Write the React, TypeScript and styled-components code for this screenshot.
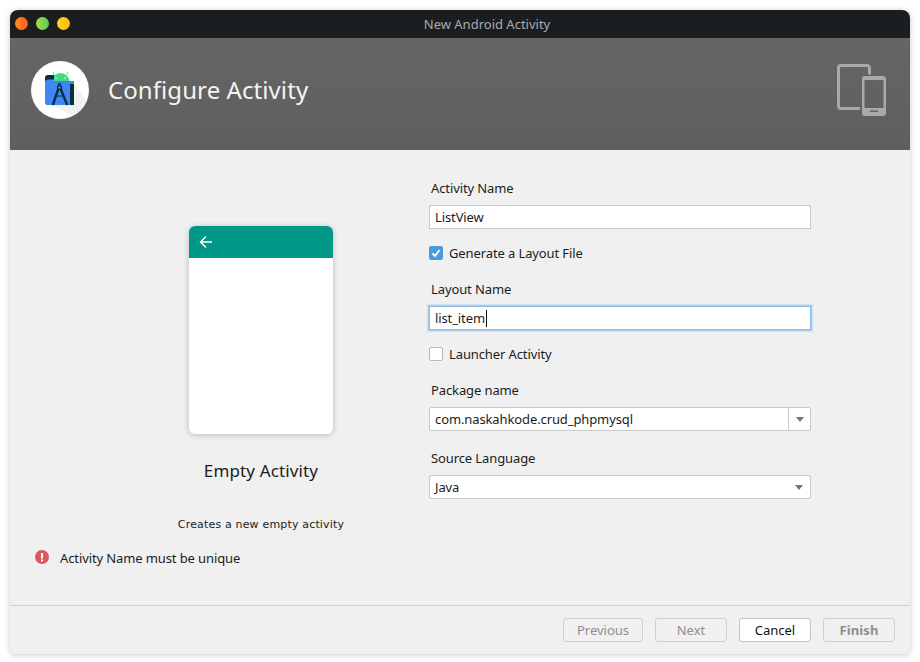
import React from 'react';
import styled, { createGlobalStyle } from 'styled-components';

const GlobalStyle = createGlobalStyle`
  html, body {
    margin: 0;
    padding: 0;
    background: #ffffff;
  }
  * {
    box-sizing: border-box;
  }
`;

const Page = styled.div`
  width: 920px;
  height: 662px;
  padding: 10px 10px 8px;
  font-family: 'Noto Sans', sans-serif;
  font-size: 13px;
  letter-spacing: -0.11px;
  color: #1c1c1c;
`;

const Window = styled.div`
  width: 900px;
  height: 644px;
  display: flex;
  flex-direction: column;
  border-radius: 8px 8px 6px 6px;
  overflow: hidden;
  background: #f0f0f0;
  box-shadow: 0 1px 6px rgba(0, 0, 0, 0.22);
`;

const TitleBar = styled.div`
  height: 28px;
  flex: none;
  position: relative;
  display: flex;
  align-items: center;
  justify-content: center;
  padding-left: 54px;
  letter-spacing: 0;
  background: #1b1e20;
  color: #a9abac;
`;

const Lights = styled.div`
  position: absolute;
  left: 5px;
  top: 7px;
  display: flex;
  gap: 8px;
`;

const Light = styled.span<{ $from: string; $to: string }>`
  width: 13px;
  height: 13px;
  border-radius: 50%;
  background: linear-gradient(90deg, ${p => p.$from}, ${p => p.$to});
`;

const Banner = styled.div`
  height: 112px;
  flex: none;
  display: flex;
  align-items: center;
  padding: 0 23px 8px 21px;
  background: linear-gradient(180deg, #656565, #5f5f5f);
`;

const LogoBadge = styled.svg`
  width: 58px;
  height: 58px;
  flex: none;
`;

const BannerTitle = styled.div`
  margin: 0 0 2px 19px;
  flex: 1;
  font-size: 24px;
  letter-spacing: 0.08px;
  color: #f4f4f4;
`;

const DevicesIcon = styled.svg`
  width: 50px;
  height: 54px;
  flex: none;
`;

const Content = styled.div`
  flex: 1;
  display: flex;
  min-height: 0;
`;

const PreviewColumn = styled.div`
  width: 419px;
  flex: none;
  padding: 76px 0 0 25px;
  display: flex;
  flex-direction: column;
`;

const PreviewGroup = styled.div`
  margin-left: 58px;
  display: flex;
  flex-direction: column;
  align-items: center;
`;

const PhoneCard = styled.div`
  width: 144px;
  height: 208px;
  border-radius: 6px;
  overflow: hidden;
  background: #ffffff;
  box-shadow: 0 1px 6px rgba(0, 0, 0, 0.22);
`;

const PhoneBar = styled.div`
  height: 32px;
  display: flex;
  align-items: center;
  padding-left: 10px;
  background: #009688;
`;

const PreviewName = styled.div`
  margin-top: 26px;
  font-size: 17px;
  letter-spacing: 0.14px;
  line-height: 22px;
`;

const PreviewDescription = styled.div`
  margin-top: 36px;
  font-family: 'DejaVu Sans', sans-serif;
  font-size: 11px;
  line-height: 14px;
  letter-spacing: 0.17px;
`;

const ErrorRow = styled.div`
  margin-top: 17px;
  display: flex;
  align-items: center;
  gap: 11px;
  line-height: 18px;
`;

const ErrorIcon = styled.svg`
  width: 14px;
  height: 14px;
  flex: none;
  margin-top: -2px;
`;

const FormColumn = styled.div`
  width: 382px;
  flex: none;
  padding-top: 29px;
  display: flex;
  flex-direction: column;
`;

const FieldLabel = styled.div`
  height: 18px;
  line-height: 18px;
  margin-left: 2px;
  margin-bottom: 8px;
`;

const TextBox = styled.div<{ $focused?: boolean }>`
  height: 24px;
  flex: none;
  display: flex;
  align-items: center;
  padding-left: 5px;
  background: #ffffff;
  border: 1px solid ${p => (p.$focused ? '#90bce8' : '#c8c8c8')};
  box-shadow: ${p => (p.$focused ? '0 0 0 1px #a8cbec, 0 0 1px 2px rgba(168, 203, 236, 0.35)' : 'none')};
`;

const Caret = styled.span`
  width: 1px;
  height: 17px;
  margin-left: 1px;
  background: #111111;
`;

const CheckRow = styled.div`
  height: 18px;
  margin-top: 15px;
  margin-bottom: 18px;
  display: flex;
  align-items: center;
  gap: 6px;
`;

const CheckBox = styled.span<{ $checked?: boolean }>`
  width: 14px;
  height: 14px;
  flex: none;
  display: flex;
  align-items: center;
  justify-content: center;
  border-radius: 2px;
  background: ${p => (p.$checked ? '#4c9be0' : '#ffffff')};
  border: 1px solid ${p => (p.$checked ? '#4c9be0' : '#b9b9b9')};
`;

const Combo = styled.div`
  height: 24px;
  flex: none;
  display: flex;
  align-items: center;
  background: #ffffff;
  border: 1px solid #c8c8c8;
  border-radius: 2px;
  margin-bottom: 18px;
`;

const ComboText = styled.div`
  flex: 1;
  padding-left: 5px;
`;

const ComboArrow = styled.div<{ $divider?: boolean }>`
  width: 22px;
  height: 100%;
  display: flex;
  align-items: center;
  justify-content: center;
  border-left: ${p => (p.$divider ? '1px solid #c8c8c8' : 'none')};

  &::after {
    content: '';
    border-left: 4.5px solid transparent;
    border-right: 4.5px solid transparent;
    border-top: 5px solid #757575;
  }
`;

const Footer = styled.div`
  height: 49px;
  flex: none;
  display: flex;
  align-items: center;
  justify-content: flex-end;
  gap: 12px;
  padding: 0 15px 0 0;
  border-top: 1px solid #d1d1d1;
`;

const Button = styled.button<{ $primary?: boolean; $width: number; $bold?: boolean }>`
  width: ${p => p.$width}px;
  height: 24px;
  padding: 0;
  border-radius: 3px;
  font-family: 'Noto Sans', sans-serif;
  font-size: 13px;
  font-weight: ${p => (p.$bold ? 700 : 400)};
  letter-spacing: ${p => (p.$bold ? '0.1px' : '0')};
  color: ${p => (p.$primary ? '#111111' : '#8e8e8e')};
  background: ${p => (p.$primary ? '#ffffff' : 'transparent')};
  border: 1px solid ${p => (p.$primary ? '#c4c4c4' : '#cfcfcf')};
`;

const StudioLogo = () => (
  <LogoBadge viewBox="31 61 58 58">
    <circle cx="60" cy="90" r="29" fill="#ffffff" />
    <path d="M74 83 L86.500 101.500 A29 29 0 0 1 72 116 L52 105 Z" fill="#f1f1f1" />
    <path d="M51.500 82 A9 9 0 0 1 69.500 82 Z" fill="#3ddc84" />
    <path d="M54.500 75 L53 72 M66.500 75 L68 72" stroke="#3ddc84" strokeWidth="0.9" />
    <circle cx="56" cy="78" r="0.7" fill="#ffffff" />
    <circle cx="65" cy="78" r="0.7" fill="#ffffff" />
    <path d="M48 75 H53 V81 H74 V105 H47.500 A2.500 2.500 0 0 1 45 102.500 V78 A3 3 0 0 1 48 75 Z" fill="#4285f4" />
    <path d="M45 78.500 A3.400 3.400 0 0 1 48.400 75 H54 V79.500 H48.400 A3.400 3.400 0 0 0 45 81.500 Z" fill="#073042" />
    <rect x="70" y="84" width="4" height="21" fill="#073042" />
    <path d="M59.500 83 V86 M58.300 89 L52.800 105 M60.700 89 L67.200 105" stroke="#073042" strokeWidth="2.400" fill="none" />
    <circle cx="59.500" cy="87.500" r="2" fill="#4285f4" stroke="#073042" strokeWidth="1.300" />
    <path d="M55.500 96 H64" stroke="#073042" strokeWidth="1.100" />
  </LogoBadge>
);

const Devices = () => (
  <DevicesIcon viewBox="837 63 50 54">
    <path
      d="M860 108.500 H841 A2.500 2.500 0 0 1 838.500 106 V68 A2.500 2.500 0 0 1 841 65.500 H867 A2.500 2.500 0 0 1 869.500 68 V74.500"
      fill="none"
      stroke="#a9a9a9"
      strokeWidth="3"
    />
    <path
      fillRule="evenodd"
      fill="#a9a9a9"
      d="M865 76 H883 A3 3 0 0 1 886 79 V113 A3 3 0 0 1 883 116 H865 A3 3 0 0 1 862 113 V79 A3 3 0 0 1 865 76 Z M864.500 80 V108 H883.500 V80 Z M870 110.500 V112 H878 V110.500 Z"
    />
  </DevicesIcon>
);

const BackArrow = () => (
  <svg width="14" height="14" viewBox="0 0 14 14" fill="none" stroke="#ffffff" strokeWidth="1.5">
    <path d="M13 7 H1.500 M7 1.500 L1.500 7 L7 12.500" />
  </svg>
);

const CheckMark = () => (
  <svg width="10" height="10" viewBox="0 0 10 10" fill="none" stroke="#ffffff" strokeWidth="1.8">
    <path d="M1.500 5.500 L4 8 L8.500 2" />
  </svg>
);

export default function App() {
  return (
    <Page>
      <GlobalStyle />
      <Window>
        <TitleBar>
          <Lights>
            <Light $from="#ff8c20" $to="#ff5a20" />
            <Light $from="#a8dc42" $to="#58cc54" />
            <Light $from="#ffd21a" $to="#fdbb14" />
          </Lights>
          New Android Activity
        </TitleBar>
        <Banner>
          <StudioLogo />
          <BannerTitle>Configure Activity</BannerTitle>
          <Devices />
        </Banner>
        <Content>
          <PreviewColumn>
            <PreviewGroup>
              <PhoneCard>
                <PhoneBar>
                  <BackArrow />
                </PhoneBar>
              </PhoneCard>
              <PreviewName>Empty Activity</PreviewName>
              <PreviewDescription>Creates a new empty activity</PreviewDescription>
            </PreviewGroup>
            <ErrorRow>
              <ErrorIcon viewBox="0 0 14 14">
                <circle cx="7" cy="7" r="7" fill="#db5860" />
                <rect x="6" y="3" width="2" height="5.500" fill="#ffffff" />
                <rect x="6" y="9.500" width="2" height="2" fill="#ffffff" />
              </ErrorIcon>
              Activity Name must be unique
            </ErrorRow>
          </PreviewColumn>
          <FormColumn>
            <FieldLabel>Activity Name</FieldLabel>
            <TextBox>ListView</TextBox>
            <CheckRow>
              <CheckBox $checked>
                <CheckMark />
              </CheckBox>
              Generate a Layout File
            </CheckRow>
            <FieldLabel>Layout Name</FieldLabel>
            <TextBox $focused>
              list_item
              <Caret />
            </TextBox>
            <CheckRow>
              <CheckBox />
              Launcher Activity
            </CheckRow>
            <FieldLabel>Package name</FieldLabel>
            <Combo>
              <ComboText>com.naskahkode.crud_phpmysql</ComboText>
              <ComboArrow $divider />
            </Combo>
            <FieldLabel>Source Language</FieldLabel>
            <Combo>
              <ComboText>Java</ComboText>
              <ComboArrow />
            </Combo>
          </FormColumn>
        </Content>
        <Footer>
          <Button $width={80}>Previous</Button>
          <Button $width={72}>Next</Button>
          <Button $width={72} $primary>
            Cancel
          </Button>
          <Button $width={72} $bold>
            Finish
          </Button>
        </Footer>
      </Window>
    </Page>
  );
}
